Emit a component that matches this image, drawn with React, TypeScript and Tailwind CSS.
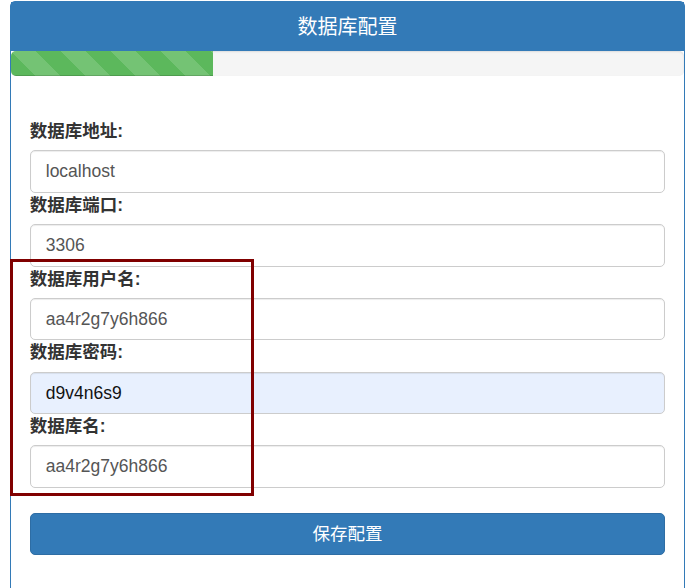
import React from "react";

const fields = [
  { label: "数据库地址:", value: "localhost" },
  { label: "数据库端口:", value: "3306" },
  { label: "数据库用户名:", value: "aa4r2g7y6h866" },
  { label: "数据库密码:", value: "d9v4n6s9", autofill: true },
  { label: "数据库名:", value: "aa4r2g7y6h866" },
];

export default function App() {
  return (
    <div
      className="relative w-[686px] h-[588px] overflow-hidden bg-white pt-[1px]"
      style={{ fontFamily: '"Liberation Sans", Arial, "Noto Sans CJK SC", sans-serif' }}
    >
      <div className="ml-[10px] w-[675px] h-[700px] border-[1.25px] border-[#337ab7] rounded-t-[5px] bg-white">
        <div className="h-[49px] bg-[#337ab7] text-white flex items-center justify-center text-[20px] leading-[22px]">
          数据库配置
        </div>
        <div className="h-[25px] bg-[#f5f5f5] rounded-[5px] overflow-hidden shadow-[inset_0_1px_2px_rgba(0,0,0,0.1)]">
          <div className="h-full w-[30%] bg-[#5cb85c] bg-[linear-gradient(45deg,rgba(255,255,255,.15)_25%,transparent_25%,transparent_50%,rgba(255,255,255,.15)_50%,rgba(255,255,255,.15)_75%,transparent_75%,transparent)] bg-[length:50px_50px] shadow-[inset_0_-1px_0_rgba(0,0,0,0.15)]" />
        </div>
        <div className="px-[18.75px] pt-[43px]">
          {fields.map((f) => (
            <div key={f.label}>
              <div className="h-[25px] leading-[25px] mb-[6.25px] text-[17.5px] font-bold text-[#333]">
                {f.label}
              </div>
              <div
                className={`h-[42.5px] border border-[#ccc] rounded-[5px] px-[15px] flex items-center text-[17.5px] shadow-[inset_0_1px_1px_rgba(0,0,0,0.075)] ${
                  f.autofill ? "bg-[#e8f0fe] text-[#111]" : "bg-white text-[#555]"
                }`}
              >
                {f.value}
              </div>
            </div>
          ))}
          <div className="mt-[25px] h-[42.5px] bg-[#337ab7] border border-[#2e6da4] rounded-[5px] text-white text-[17.5px] flex items-center justify-center">
            保存配置
          </div>
        </div>
      </div>
      <div className="absolute left-[10px] top-[259px] w-[244px] h-[237px] border-[3px] border-[#800000]" />
    </div>
  );
}
